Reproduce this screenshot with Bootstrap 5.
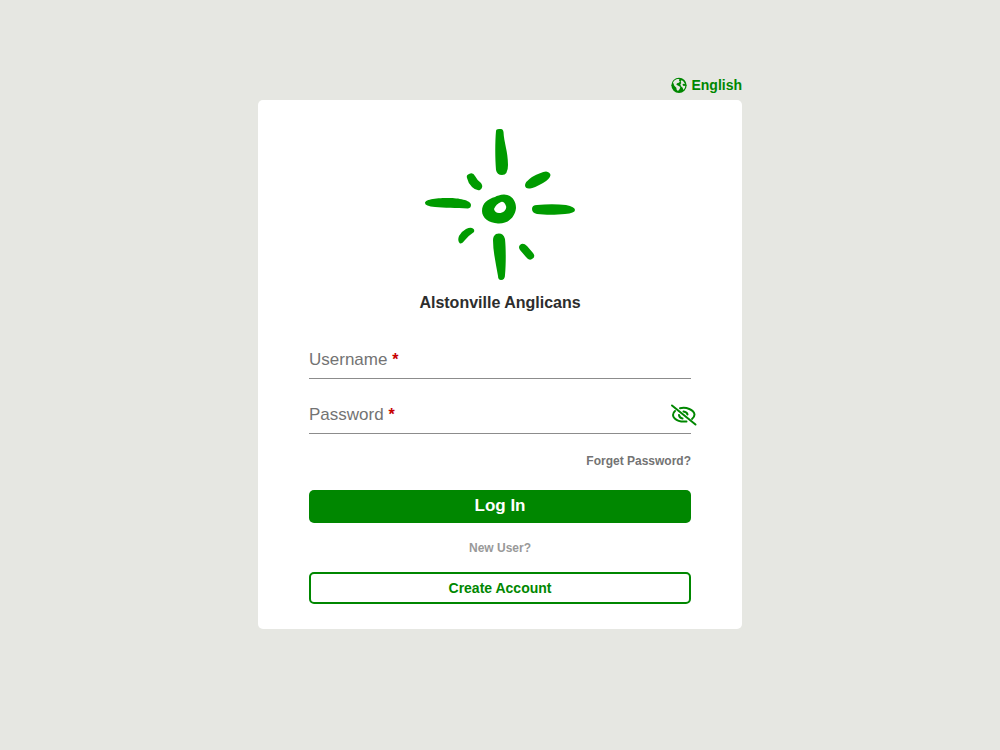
<!DOCTYPE html>
<html lang="en">
<head>
<meta charset="utf-8">
<meta name="viewport" content="width=device-width, initial-scale=1">
<title>Alstonville Anglicans - Log In</title>
<link href="https://cdn.jsdelivr.net/npm/bootstrap@5.3.0/dist/css/bootstrap.min.css" rel="stylesheet">
<script src="https://cdn.jsdelivr.net/npm/bootstrap@5.3.0/dist/js/bootstrap.bundle.min.js" defer></script>
<style>
  body { background: #e6e7e2; font-family: "Liberation Sans", Arial, sans-serif; }
  .login-wrap { max-width: 484px; padding-top: 77px; }
  .brand-green { color: #008700; }
  .lang-bar { padding-bottom: 7px; }
  .lang-link { font-size: 14px; line-height: 16px; }
  .login-card { border-radius: 5px; padding: 28px 51px 25px; }
  .org-name { font-size: 16px; line-height: 20px; color: #2d2d2d; padding-top: 11px; }
  .login-form { padding-top: 27px; }
  .field-row { border-bottom: 1px solid #8c8c8c; height: 39px; padding-top: 2px; }
  .field-row + .field-row { margin-top: 16px; }
  .field-row label { font-size: 17px; line-height: 20px; color: #737373; }
  .field-row .req { color: #c80000; font-size: 16px; font-weight: bold; }
  .field-row input { min-width: 0; outline: 0; }
  .eye-btn { margin-right: -6px; padding: 0; line-height: 0; }
  .forget-row { padding-top: 18px; line-height: 16px; margin-bottom: 21px; }
  .forget-link { font-size: 12px; line-height: 16px; color: #737373; }
  .new-user { font-size: 12px; line-height: 16px; color: #999; margin: 17px 0 16px; }
  .btn-login, .btn-create { border-radius: 5px; padding: 0; }
  .btn-login { --bs-btn-bg: #008700; --bs-btn-color: #fff; --bs-btn-hover-bg: #007300; --bs-btn-hover-color: #fff; font-size: 17px; line-height: 20px; padding: 6px 0 7px; }
  .btn-create { --bs-btn-color: #008700; --bs-btn-border-color: #008700; --bs-btn-border-width: 2px; --bs-btn-hover-color: #fff; --bs-btn-hover-bg: #008700; font-size: 14px; line-height: 28px; }
</style>
</head>
<body>
<main class="login-wrap mx-auto">
  <div class="d-flex justify-content-end lang-bar">
    <a href="#" class="lang-link brand-green fw-bold text-decoration-none d-flex align-items-center gap-1">
      <svg width="16" height="16" viewBox="0 0 48 48" aria-hidden="true"><circle cx="24" cy="25" r="23" fill="#008700"/><path fill="#e6e7e2" d="M6 16Q10 9 18 6L25 6L24 11L27 14L22 18L18 19L16 23L22 26L28 30L26 36L21 42L17 38L16 32L10 26ZM32 9Q39 13 42 21L37 20L34 23L38 27L43 26Q43 34 37 39L35 32L30 28L28 22L31 18L29 14Z"/></svg>
      <span>English</span>
    </a>
  </div>
  <div class="login-card bg-white">
    <div class="text-center">
      <svg class="d-block mx-auto" width="152" height="154" viewBox="424 128 152 154" fill="#009b00" role="img" aria-label="Sun logo">
        <path d="M496 131Q496 129 499 129H501Q503 129 503.500 132C504 143 508 151 508 165Q508 175 502 175Q497 175 496 170C495 158 495 142 496 131Z"/>
        <path d="M496 234Q503 232 505 239C506 248 506 264 505 275Q505 280 501 280Q498 280 498 276C496 264 493 252 493 240Q493 236 496 234Z"/>
        <path d="M425 203C425 199 438 198 449 198C458 198 471 200 471 205Q471 208 468 208.500C456 208 444 208 435 207Q425 206 425 203Z"/>
        <path d="M532 209Q532 205 537 205C547 204 557 204 566 205Q575 207 575 210Q575 213 565 214C556 215 545 215 537 214Q532 213 532 209Z"/>
        <path d="M469 174Q473 172 475 176Q477 180 481 183Q484 187 480 190Q476 191 472 187Q468 183 467 178Q466 175 469 174Z"/>
        <path d="M525 185Q525 182 532 177Q541 172 546 171.500Q550 172 550.500 175Q550 179 543 183Q534 188 530 188.500Q525 189 525 185Z"/>
        <path d="M472 228Q475 229 474 232Q468 236 465 240Q462 244 460 243.500Q457 241 459 236Q462 231 466 229Q470 227 472 228Z"/>
        <path d="M520 245Q523 242 527 246L533 253Q536 257 532 259Q529 261 526 257L520 250Q518 247 520 245Z"/>
        <path fill-rule="evenodd" d="M482 211C482 203 488 199 495 197Q498 195 504 194.500C512 195 516 201 516 208C515 218 507 224 498 223.500C489 223 482 218 482 211ZM494 209Q495 213 499 213C504 213 507 209 506 206Q504 201 501 202Q496 204 494 209Z"/>
      </svg>
      <h1 class="org-name fw-bold mb-0">Alstonville Anglicans</h1>
    </div>
    <form class="login-form">
      <div class="field-row d-flex align-items-center">
        <label for="username">Username <span class="req">*</span></label>
        <input id="username" type="text" class="flex-grow-1 border-0 bg-transparent" required>
      </div>
      <div class="field-row d-flex align-items-center">
        <label for="password">Password <span class="req">*</span></label>
        <input id="password" type="password" class="flex-grow-1 border-0 bg-transparent" required>
        <button type="button" class="eye-btn brand-green border-0 bg-transparent" aria-label="Show password">
          <svg width="27" height="22" viewBox="0 0 27 22" fill="none" stroke="currentColor" stroke-width="2" stroke-linecap="round" aria-hidden="true"><path d="M2 1.500L25.500 20.500"/><path d="M10 4.300C16 2.800 24 5.500 24.500 10.500Q24.500 13 22 15"/><path d="M5 7C-.500 12 6 18.500 16.500 17.500"/><path d="M9 11Q9.500 14 12.500 14.500M13.500 7.500Q17 8 17.500 10.500"/></svg>
        </button>
      </div>
      <div class="text-end forget-row"><a href="#" class="forget-link fw-bold text-decoration-none">Forget Password?</a></div>
      <button type="submit" class="btn btn-login border-0 w-100 d-block fw-bold">Log In</button>
      <p class="new-user fw-bold text-center">New User?</p>
      <button type="button" class="btn btn-create w-100 d-block fw-bold">Create Account</button>
    </form>
  </div>
</main>
</body>
</html>
